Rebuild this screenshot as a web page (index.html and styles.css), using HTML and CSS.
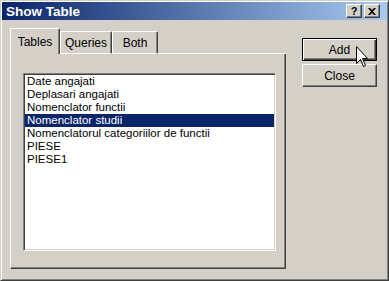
FILE: index.html
```html
<!DOCTYPE html>
<html>
<head>
    <title>Show Table</title>
    <meta name="viewport" content="width=device-width, initial-scale=1.0">
    <link rel="stylesheet" href="styles.css">
</head>
<body>
    <div class="window">
        <!-- Title bar -->
        <div class="titlebar">
            <span class="title">Show Table</span>
            <div class="caption-buttons">
                <button type="button" class="cap-btn help">?</button>
                <button type="button" class="cap-btn">
                    <svg width="8" height="7" viewBox="0 0 8 7">
                        <path d="M0 0h2l2 2 2-2h2L5 3.5 8 7H6L4 5 2 7H0l3-3.5z" fill="#000"/>
                    </svg>
                </button>
            </div>
        </div>

        <div class="content">
            <!-- Tabs with the table list -->
            <div class="tabs">
                <div class="tab-strip">
                    <div class="tab active">Tables</div>
                    <div class="tab">Queries</div>
                    <div class="tab">Both</div>
                    <div class="tab-fill"></div>
                </div>
                <div class="tab-panel">
                    <ul class="listbox">
                        <li>Date angajati</li>
                        <li>Deplasari angajati</li>
                        <li>Nomenclator functii</li>
                        <li class="selected">Nomenclator studii</li>
                        <li>Nomenclatorul categoriilor de functii</li>
                        <li>PIESE</li>
                        <li>PIESE1</li>
                    </ul>
                </div>
            </div>

            <!-- Dialog buttons -->
            <div class="actions">
                <button type="button" class="btn default">Add</button>
                <button type="button" class="btn">Close</button>
                <svg class="cursor" width="13" height="21" viewBox="0 0 13 21">
                    <path d="M0.5 0.5V17.5L4.5 13.5L7.5 20.5L9.5 19.5L6.5 12.5H11.5Z" fill="#fff" stroke="#000" stroke-width="1" stroke-linejoin="miter"/>
                </svg>
            </div>
        </div>
    </div>
</body>
</html>
```

FILE: styles.css
```css
* {
    box-sizing: border-box;
    margin: 0;
    padding: 0;
}

body {
    font-family: "Liberation Sans", Arial, sans-serif;
    font-size: 11.5px;
    color: #000;
    background: #d4d0c8;
}

/* Outer dialog frame */
.window {
    width: 389px;
    height: 281px;
    display: flex;
    flex-direction: column;
    background: #d4d0c8;
    border: 1px solid;
    border-color: #d4d0c8 #404040 #404040 #d4d0c8;
    box-shadow: inset 1px 1px #fff, inset -1px -1px #808080;
    padding: 1px;
}

/* Title bar */
.titlebar {
    height: 18px;
    display: flex;
    align-items: center;
    justify-content: space-between;
    padding: 0 7px 0 4px;
    background: linear-gradient(to right, #0a246a, #a6caf0);
}
.title {
    color: #fff;
    font-weight: bold;
    font-size: 13.5px;
}
.caption-buttons {
    display: flex;
    gap: 2px;
}
.cap-btn {
    width: 16px;
    height: 14px;
    display: flex;
    align-items: center;
    justify-content: center;
    background: #d4d0c8;
    border: 1px solid;
    border-color: #fff #404040 #404040 #fff;
    box-shadow: inset -1px -1px #808080;
    font-family: "Liberation Sans", Arial, sans-serif;
    font-weight: bold;
    font-size: 11px;
    line-height: 12px;
    color: #000;
}

/* Dialog body */
.content {
    flex: 1;
    display: flex;
    padding: 8px 9px 10px 8px;
}

.tabs {
    width: 276px;
    display: flex;
    flex-direction: column;
}
.tab-strip {
    height: 26px;
    display: flex;
    align-items: flex-start;
}
.tab {
    height: 23px;
    margin-top: 3px;
    padding: 5px 0 0;
    text-align: center;
    font-size: 12px;
    line-height: 13px;
    border: 1px solid;
    border-color: #fff #404040 #fff #fff;
    border-radius: 2px 2px 0 0;
    box-shadow: inset -1px 0 #808080;
}
.tab.active {
    width: 50px;
    height: 26px;
    margin-top: 0;
    padding-top: 7px;
    border-bottom: none;
}
.tab:nth-child(2) {
    width: 52px;
}
.tab:nth-child(3) {
    width: 46px;
}
.tab-fill {
    flex: 1;
    align-self: flex-end;
    border-bottom: 1px solid #fff;
}

.tab-panel {
    flex: 1;
    display: flex;
    flex-direction: column;
    padding: 19px 9px 17px 12px;
    border: 1px solid;
    border-top: none;
    border-color: #fff #404040 #404040 #fff;
    box-shadow: inset -1px -1px #808080;
}

/* Table list */
.listbox {
    flex: 1;
    list-style: none;
    background: #fff;
    padding-top: 1px;
    border: 1px solid;
    border-color: #808080 #fff #fff #808080;
    box-shadow: inset 1px 1px #404040, inset -1px -1px #d4d0c8;
}
.listbox li {
    height: 13px;
    line-height: 13px;
    padding-left: 2px;
    margin: 0 1px;
    white-space: nowrap;
}
.listbox li.selected {
    background: #0a246a;
    color: #fff;
}

/* Add / Close buttons */
.actions {
    position: relative;
    margin: 10px 0 0 16px;
    display: flex;
    flex-direction: column;
    gap: 3px;
}
.btn {
    width: 75px;
    height: 23px;
    background: #d4d0c8;
    font-family: "Liberation Sans", Arial, sans-serif;
    font-size: 12px;
    color: #000;
    border: 1px solid;
    border-color: #fff #404040 #404040 #fff;
    box-shadow: inset -1px -1px #808080;
}
.btn.default {
    border-color: #000;
    box-shadow: inset 1px 1px #fff, inset -1px -1px #404040, inset -2px -2px #808080;
}

/* Mouse pointer resting on Add */
.cursor {
    position: absolute;
    left: 54px;
    top: 8px;
}
```
